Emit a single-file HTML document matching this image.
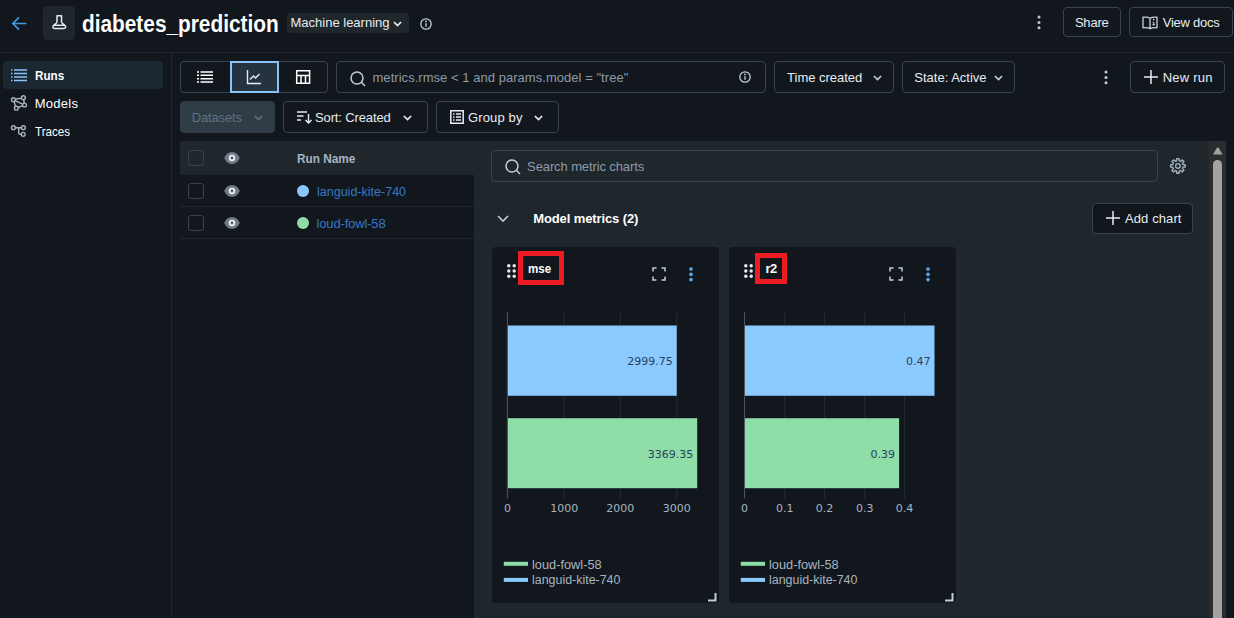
<!DOCTYPE html>
<html lang="en">
<head>
<meta charset="utf-8">
<title>diabetes_prediction</title>
<style>
*{box-sizing:border-box;margin:0;padding:0}
html,body{width:1234px;height:618px;overflow:hidden;background:#11171d;color:#e8ecf0;
  font-family:"Liberation Sans","DejaVu Sans",sans-serif;font-size:13px}
.abs{position:absolute}
#root{position:relative;width:1234px;height:618px;overflow:hidden;background:#11171d}
.btn{position:absolute;border:1px solid #37444f;border-radius:4px;background:#11171d}
.t{position:absolute;white-space:nowrap;line-height:1;transform-origin:0 0}
svg{position:absolute;overflow:visible}
.cb{width:16px;height:16px;border:1px solid #38424b;border-radius:3px}
.card{width:227px;height:356px;background:#11171d;border-radius:4px}
</style>
</head>
<body>
<div id="root">
<div class="abs" style="left:0;top:52px;width:1234px;height:1px;background:#1f272d"></div>
<svg style="left:11px;top:14.500px" width="17" height="17" viewBox="0 0 16 16"><path d="M14.500 8H2.200M7.500 2.300L1.800 8l5.700 5.700" fill="none" stroke="#4299e0" stroke-width="1.600"/></svg>
<div class="abs" style="left:43px;top:6px;width:32px;height:34px;border-radius:4px;background:#1f272d"></div>
<svg style="left:0;top:0" width="90" height="50" viewBox="0 0 90 50"><path d="M57 15.700H61.500V22C61.500 24 65.700 24.300 65.700 26.800C65.700 27.900 65 28.400 64 28.400H54.500C53.500 28.400 52.800 27.900 52.800 26.800C52.800 24.300 57 24 57 22Z M54 25.300H64.500" fill="none" stroke="#e8ecf0" stroke-width="1.500" stroke-linejoin="round"/></svg>
<div class="t" style="left:82.4px;top:12.93px;font-size:23px;font-weight:bold;transform:scaleX(0.9051);color:#ffffff">diabetes_prediction</div>
<div class="abs" style="left:287px;top:13px;width:121.500px;height:19.500px;border-radius:4px;background:#1f272d"></div>
<div class="t" style="left:290.5px;top:16px;font-size:13px;color:#e8ecf0">Machine learning</div>
<svg style="left:392.5px;top:20.5px" width="9" height="6" viewBox="0 0 9 6"><path d="M.9 1l3.600 3.600L8.100 1" fill="none" stroke="#e8ecf0" stroke-width="1.700"/></svg>
<svg style="left:420px;top:17.5px" width="12" height="12" viewBox="0 0 12 12"><circle cx="6" cy="6" r="5.200" fill="none" stroke="#c0cdd8" stroke-width="1.300"/><path d="M6 5.300v3.400" stroke="#c0cdd8" stroke-width="1.400"/><circle cx="6" cy="3.400" r=".9" fill="#c0cdd8"/></svg>
<svg style="left:1037px;top:14.5px" width="4" height="15" viewBox="0 0 4 15"><circle cx="2" cy="2" r="1.500" fill="#c0cdd8"/><circle cx="2" cy="7.400" r="1.500" fill="#c0cdd8"/><circle cx="2" cy="12.800" r="1.500" fill="#c0cdd8"/></svg>
<div class="btn" style="left:1063px;top:7px;width:58px;height:30px;"></div>
<div class="t" style="left:1074.9px;top:15.9px;font-size:13px;letter-spacing:-0.2px;color:#e8ecf0">Share</div>
<div class="btn" style="left:1129px;top:7px;width:104px;height:30px;"></div>
<div class="t" style="left:1162.7px;top:15.9px;font-size:13px;letter-spacing:-0.23px;color:#e8ecf0">View docs</div>
<svg style="left:1142px;top:15.500px" width="16" height="14" viewBox="0 0 16 14"><path d="M8 2.200C6.500 1.200 3.500 1 1 1.200v10.600c2.500-.2 5.500 0 7 1 1.500-1 4.500-1.200 7-1V1.200C12.500 1 9.500 1.200 8 2.200zM8 2.200v10.600" fill="none" stroke="#c8d2dc" stroke-width="1.300" stroke-linejoin="round"/><path d="M10.700 6.300h1.100v2.500M10.400 8.800h2.600" stroke="#dfe5ea" stroke-width="1" fill="none"/><circle cx="11.700" cy="3.600" r=".8" fill="#dfe5ea"/></svg>
<div class="abs" style="left:171px;top:53px;width:1px;height:565px;background:#1f272d"></div>
<div class="abs" style="left:3px;top:61px;width:160px;height:28px;border-radius:4px;background:#1b2731"></div>
<svg style="left:11px;top:69px" width="16" height="12" viewBox="0 0 16 12"><path d="M3 1h13M3 4.500h13M3 8h13M3 11.500h13" stroke="#8ac3f5" stroke-width="1.400"/><path d="M0 1h1.500M0 4.500h1.500M0 8h1.500M0 11.500h1.500" stroke="#8ac3f5" stroke-width="1.400"/></svg>
<div class="t" style="left:34.7px;top:68.8px;font-size:13px;font-weight:bold;transform:scaleX(0.8973);color:#ffffff">Runs</div>
<svg style="left:0;top:0" width="60" height="145" viewBox="0 0 60 145"><g fill="none" stroke="#a9b4be" stroke-width="1.400"><circle cx="13.400" cy="99.700" r="1.900"/><circle cx="23.400" cy="97.700" r="1.900"/><circle cx="24.500" cy="105" r="1.900"/><circle cx="16.300" cy="108.200" r="1.900"/><path d="M15.300 99.300l6.200-1.200M15.100 100.600l7.600 3.600M14 101.500l1.700 4.900M23.700 99.600l.5 3.500M22.700 105.700l-4.600 1.800"/></g></svg>
<div class="t" style="left:34.7px;top:96.8px;font-size:13px;letter-spacing:0.28px;color:#ffffff">Models</div>
<svg style="left:0;top:0" width="60" height="145" viewBox="0 0 60 145"><g fill="none" stroke="#a9b4be" stroke-width="1.400"><circle cx="13.400" cy="127.700" r="1.900"/><circle cx="23.400" cy="127.700" r="1.900"/><circle cx="23.200" cy="134.300" r="1.900"/><path d="M15.300 127.700h6.200M18.700 127.700v5c0 1 .6 1.600 1.600 1.600h1"/></g></svg>
<div class="t" style="left:35.3px;top:125px;font-size:13px;transform:scaleX(0.8926);color:#ffffff">Traces</div>
<div class="abs" style="left:180px;top:61px;width:148px;height:32px;border:1px solid #37444f;border-radius:4px"></div>
<div class="abs" style="left:230px;top:61px;width:49px;height:32px;border:2px solid #8ac3f5;background:#253340"></div>
<svg style="left:197px;top:71px" width="16" height="12" viewBox="0 0 16 12"><path d="M3.500 1h12.500M3.500 4.300h12.500M3.500 7.700h12.500M3.500 11h12.500" stroke="#fff" stroke-width="1.500"/><path d="M0 1h2M0 4.300h2M0 7.700h2M0 11h2" stroke="#fff" stroke-width="1.500"/></svg>
<svg style="left:246px;top:69px" width="16" height="16" viewBox="0 0 16 16"><path d="M1.500 1v13.500H15" fill="none" stroke="#e8ecf0" stroke-width="1.400"/><path d="M4 10.500l3.500-3.500 2 2L13.500 5" fill="none" stroke="#e8ecf0" stroke-width="1.400"/></svg>
<svg style="left:0;top:0" width="400" height="100" viewBox="0 0 400 100"><path d="M296.700 70.700h12.900v12.600h-12.900zM296.700 75.400h12.900M301 75.400v7.900M305.500 75.400v7.900" fill="none" stroke="#fff" stroke-width="1.500"/></svg>
<div class="abs" style="left:336px;top:61px;width:430px;height:32px;border:1px solid #37444f;border-radius:4px"></div>
<svg style="left:350px;top:70.5px" width="16" height="16" viewBox="0 0 16 16"><circle cx="7" cy="7" r="6" fill="none" stroke="#c0cdd8" stroke-width="1.500"/><path d="M11.300 11.300l3.700 3.700" stroke="#c0cdd8" stroke-width="1.500"/></svg>
<div class="t" style="left:372.5px;top:71px;font-size:13px;letter-spacing:0.04px;color:#8d9ba8">metrics.rmse &lt; 1 and params.model = "tree"</div>
<svg style="left:739.3px;top:71px" width="12" height="12" viewBox="0 0 12 12"><circle cx="6" cy="6" r="5.200" fill="none" stroke="#c0cdd8" stroke-width="1.300"/><path d="M6 5.300v3.400" stroke="#c0cdd8" stroke-width="1.400"/><circle cx="6" cy="3.400" r=".9" fill="#c0cdd8"/></svg>
<div class="btn" style="left:774px;top:61px;width:120px;height:32px;"></div>
<div class="t" style="left:787.1px;top:71px;font-size:13px;letter-spacing:-0.02px;color:#e8ecf0">Time created</div>
<svg style="left:873px;top:74.5px" width="9" height="6" viewBox="0 0 9 6"><path d="M.9 1l3.600 3.600L8.100 1" fill="none" stroke="#c0cdd8" stroke-width="1.700"/></svg>
<div class="btn" style="left:902px;top:61px;width:113px;height:32px;"></div>
<div class="t" style="left:914.3px;top:71px;font-size:13px;color:#e8ecf0">State: Active</div>
<svg style="left:994px;top:74.5px" width="9" height="6" viewBox="0 0 9 6"><path d="M.9 1l3.600 3.600L8.100 1" fill="none" stroke="#c0cdd8" stroke-width="1.700"/></svg>
<svg style="left:1104px;top:69.5px" width="4" height="15" viewBox="0 0 4 15"><circle cx="2" cy="2" r="1.500" fill="#c0cdd8"/><circle cx="2" cy="7.400" r="1.500" fill="#c0cdd8"/><circle cx="2" cy="12.800" r="1.500" fill="#c0cdd8"/></svg>
<div class="btn" style="left:1130px;top:61px;width:95px;height:32px;"></div>
<svg style="left:1144px;top:70px" width="14" height="14" viewBox="0 0 14 14"><path d="M7 0v14M0 7h14" stroke="#e8ecf0" stroke-width="1.500"/></svg>
<div class="t" style="left:1162.7px;top:71px;font-size:13px;letter-spacing:0.23px;color:#e8ecf0">New run</div>
<div class="btn" style="left:180px;top:101px;width:95px;height:32px;background:#303c46;border-color:#303c46"></div>
<div class="t" style="left:191.8px;top:111px;font-size:13px;letter-spacing:-0.17px;color:#5f7281">Datasets</div>
<svg style="left:254px;top:114.5px" width="9" height="6" viewBox="0 0 9 6"><path d="M.9 1l3.600 3.600L8.100 1" fill="none" stroke="#5f7281" stroke-width="1.700"/></svg>
<div class="btn" style="left:283px;top:101px;width:145px;height:32px;"></div>
<div class="t" style="left:315px;top:111px;font-size:13px;letter-spacing:-0.13px;color:#e8ecf0">Sort: Created</div>
<svg style="left:402.5px;top:114.5px" width="9" height="6" viewBox="0 0 9 6"><path d="M.9 1l3.600 3.600L8.100 1" fill="none" stroke="#e8ecf0" stroke-width="1.700"/></svg>
<svg style="left:296.500px;top:111px" width="16" height="13" viewBox="0 0 16 13"><path d="M0 1h10M0 5h6.500M0 9h4" stroke="#e8ecf0" stroke-width="1.500"/><path d="M11.500 3v9M8.500 9l3 3 3-3" fill="none" stroke="#e8ecf0" stroke-width="1.400"/></svg>
<div class="btn" style="left:436px;top:101px;width:123px;height:32px;"></div>
<div class="t" style="left:468px;top:111px;font-size:13px;letter-spacing:0.14px;color:#e8ecf0">Group by</div>
<svg style="left:534px;top:114.5px" width="9" height="6" viewBox="0 0 9 6"><path d="M.9 1l3.600 3.600L8.100 1" fill="none" stroke="#e8ecf0" stroke-width="1.700"/></svg>
<svg style="left:449.500px;top:110px" width="14" height="14" viewBox="0 0 14 14"><path d="M.8.800h12.400v12.400H.800z" fill="none" stroke="#e8ecf0" stroke-width="1.500"/><path d="M3 4h1.500M6 4h5M3 7h1.500M6 7h5M3 10h1.500M6 10h5" stroke="#e8ecf0" stroke-width="1.300"/></svg>
<div class="abs" style="left:180px;top:141px;width:294px;height:34px;background:#1f272d"></div>
<div class="abs" style="left:180px;top:206px;width:294px;height:1px;background:#1f272d"></div>
<div class="abs" style="left:180px;top:238px;width:294px;height:1px;background:#1f272d"></div>
<div class="abs cb" style="left:188px;top:150px"></div>
<div class="abs cb" style="left:188px;top:183px"></div>
<div class="abs cb" style="left:188px;top:215px"></div>
<svg style="left:224.2px;top:152.2px" width="16" height="12" viewBox="0 0 16 12"><path d="M.2 6C1.800 2.200 4.800 0 8 0s6.200 2.200 7.800 6C14.200 9.800 11.200 12 8 12S1.800 9.800 .2 6z" fill="#717d88"/><circle cx="8" cy="6" r="3.200" fill="#eef1f4"/><circle cx="8" cy="6" r="1.400" fill="#4c5863"/></svg>
<svg style="left:224.2px;top:185px" width="16" height="12" viewBox="0 0 16 12"><path d="M.2 6C1.800 2.200 4.800 0 8 0s6.200 2.200 7.800 6C14.200 9.800 11.200 12 8 12S1.800 9.800 .2 6z" fill="#717d88"/><circle cx="8" cy="6" r="3.200" fill="#eef1f4"/><circle cx="8" cy="6" r="1.400" fill="#4c5863"/></svg>
<svg style="left:224.2px;top:216.8px" width="16" height="12" viewBox="0 0 16 12"><path d="M.2 6C1.800 2.200 4.800 0 8 0s6.200 2.200 7.800 6C14.200 9.800 11.200 12 8 12S1.800 9.800 .2 6z" fill="#717d88"/><circle cx="8" cy="6" r="3.200" fill="#eef1f4"/><circle cx="8" cy="6" r="1.400" fill="#4c5863"/></svg>
<div class="t" style="left:296.6px;top:152.1px;font-size:13px;font-weight:bold;transform:scaleX(0.9049);color:#a8b5c0">Run Name</div>
<div class="abs" style="left:297px;top:185px;width:12px;height:12px;border-radius:50%;background:#8ac7fd"></div>
<div class="t" style="left:316.5px;top:184.5px;font-size:13px;transform:scaleX(0.9627);color:#3678c6">languid-kite-740</div>
<div class="abs" style="left:297px;top:217px;width:12px;height:12px;border-radius:50%;background:#8edda8"></div>
<div class="t" style="left:316.5px;top:216.5px;font-size:13px;letter-spacing:-0.15px;color:#3678c6">loud-fowl-58</div>
<div class="abs" style="left:474px;top:141px;width:735px;height:477px;background:#1f272d"></div>
<div class="abs" style="left:491px;top:150px;width:667px;height:32px;border:1px solid #37444f;border-radius:4px"></div>
<svg style="left:504.5px;top:159px" width="16" height="16" viewBox="0 0 16 16"><circle cx="7" cy="7" r="6" fill="none" stroke="#c0cdd8" stroke-width="1.500"/><path d="M11.300 11.300l3.700 3.700" stroke="#c0cdd8" stroke-width="1.500"/></svg>
<div class="t" style="left:527.1px;top:160px;font-size:13px;letter-spacing:-0.11px;color:#8d9ba8">Search metric charts</div>
<svg style="left:0;top:0" width="1234" height="200" viewBox="0 0 1234 200"><g fill="none" stroke="#a3b0bc" stroke-width="1.400" stroke-linejoin="round"><path d="M1176.62 160.76L1176.69 158.60L1179.11 158.60L1179.18 160.76L1180.63 161.36L1182.20 159.88L1183.92 161.60L1182.44 163.17L1183.04 164.62L1185.20 164.69L1185.20 167.11L1183.04 167.18L1182.44 168.63L1183.92 170.20L1182.20 171.92L1180.63 170.44L1179.18 171.04L1179.11 173.20L1176.69 173.20L1176.62 171.04L1175.17 170.44L1173.60 171.92L1171.88 170.20L1173.36 168.63L1172.76 167.18L1170.60 167.11L1170.60 164.69L1172.76 164.62L1173.36 163.17L1171.88 161.60L1173.60 159.88L1175.17 161.36Z"/><circle cx="1177.900" cy="165.900" r="2.300"/></g></svg>
<svg style="left:497px;top:214.500px" width="12" height="8" viewBox="0 0 12 8"><path d="M1 1l5 5 5-5" fill="none" stroke="#c0cdd8" stroke-width="1.600"/></svg>
<div class="t" style="left:533.2px;top:212.2px;font-size:13px;font-weight:bold;letter-spacing:-0.11px;color:#ffffff">Model metrics (2)</div>
<div class="btn" style="left:1092px;top:203px;width:101px;height:31px;"></div>
<svg style="left:1105.5px;top:211px" width="14" height="14" viewBox="0 0 14 14"><path d="M7 0v14M0 7h14" stroke="#e8ecf0" stroke-width="1.500"/></svg>
<div class="t" style="left:1125px;top:211.7px;font-size:13px;letter-spacing:0.1px;color:#e8ecf0">Add chart</div>
<div class="abs" style="left:1208.500px;top:141px;width:17px;height:477px;background:#2a2d2f"></div>
<svg style="left:1213px;top:146.500px" width="9.500" height="7.500" viewBox="0 0 9.500 7.500"><path d="M0 7.500L3.900 .7Q4.750 -.3 5.600 .7L9.500 7.500z" fill="#a4a3a2"/></svg>
<div class="abs" style="left:1213px;top:159.500px;width:9.200px;height:470px;border-radius:4.600px;background:#a4a3a2"></div>
<div class="abs card" style="left:492px;top:247px"></div>
<svg style="left:507.3px;top:264px" width="9" height="14" viewBox="0 0 9 14"><g fill="#e8ecf0"><circle cx="1.800" cy="1.700" r="1.700"/><circle cx="7.200" cy="1.700" r="1.700"/><circle cx="1.800" cy="7" r="1.700"/><circle cx="7.200" cy="7" r="1.700"/><circle cx="1.800" cy="12.300" r="1.700"/><circle cx="7.200" cy="12.300" r="1.700"/></g></svg>
<div class="abs" style="left:518px;top:251px;width:46px;height:34px;border:5px solid #ed1c24"></div>
<div class="t" style="left:528.4px;top:262.2px;font-size:13px;font-weight:bold;transform:scaleX(0.8886);color:#ffffff">mse</div>
<svg style="left:651.5px;top:267px" width="14" height="14" viewBox="0 0 14 14"><path d="M1 4.500V1h3.500M9.500 1H13v3.500M13 9.500V13H9.500M4.500 13H1V9.500" fill="none" stroke="#c0cdd8" stroke-width="1.500"/></svg>
<svg style="left:688.7px;top:266.700px" width="4" height="15" viewBox="0 0 4 15"><circle cx="2" cy="2" r="1.850" fill="#58a6e8"/><circle cx="2" cy="7.300" r="1.850" fill="#58a6e8"/><circle cx="2" cy="12.600" r="1.850" fill="#58a6e8"/></svg>
<svg style="left:492px;top:247px" width="227" height="356" viewBox="0 0 227 356">
<path d="M72.2 65V251.500" stroke="#232b33" stroke-width="1"/>
<path d="M128.3 65V251.500" stroke="#232b33" stroke-width="1"/>
<path d="M184.7 65V251.500" stroke="#232b33" stroke-width="1"/>
<path d="M15.4 65V251.500" stroke="#4d555d" stroke-width="1"/>
<rect x="15.9" y="78.500" width="168.8" height="70.300" fill="#8acaff"/>
<rect x="15.9" y="171.200" width="189.3" height="70" fill="#8fdda7"/>
<text x="180.70000000000002" y="118.400" text-anchor="end" font-family="DejaVu Sans, Verdana, sans-serif" font-size="11" fill="#2a3f5f">2999.75</text>
<text x="201.20000000000002" y="210.900" text-anchor="end" font-family="DejaVu Sans, Verdana, sans-serif" font-size="11" fill="#2a3f5f">3369.35</text>
<text x="15.4" y="265" text-anchor="middle" font-family="DejaVu Sans, Verdana, sans-serif" font-size="11" fill="#a8b5c0">0</text>
<text x="72.2" y="265" text-anchor="middle" font-family="DejaVu Sans, Verdana, sans-serif" font-size="11" fill="#a8b5c0">1000</text>
<text x="128.3" y="265" text-anchor="middle" font-family="DejaVu Sans, Verdana, sans-serif" font-size="11" fill="#a8b5c0">2000</text>
<text x="184.7" y="265" text-anchor="middle" font-family="DejaVu Sans, Verdana, sans-serif" font-size="11" fill="#a8b5c0">3000</text>
<path d="M11.750 316.800h24.300" stroke="#8fdda7" stroke-width="4"/>
<path d="M11.750 332.900h24.300" stroke="#8acaff" stroke-width="4"/>
<path d="M216 353.500h7.500V346" fill="none" stroke="#c0cdd8" stroke-width="2"/>
</svg>
<div class="t" style="left:531.9px;top:558.64px;font-size:12px;transform:scaleX(1.0657);color:#a8b5c0">loud-fowl-58</div>
<div class="t" style="left:531.9px;top:574.44px;font-size:12px;transform:scaleX(1.0358);color:#a8b5c0">languid-kite-740</div>
<div class="abs card" style="left:729px;top:247px"></div>
<svg style="left:744.3px;top:264px" width="9" height="14" viewBox="0 0 9 14"><g fill="#e8ecf0"><circle cx="1.800" cy="1.700" r="1.700"/><circle cx="7.200" cy="1.700" r="1.700"/><circle cx="1.800" cy="7" r="1.700"/><circle cx="7.200" cy="7" r="1.700"/><circle cx="1.800" cy="12.300" r="1.700"/><circle cx="7.200" cy="12.300" r="1.700"/></g></svg>
<div class="abs" style="left:755px;top:253px;width:32px;height:31px;border:5px solid #ed1c24"></div>
<div class="t" style="left:765.4px;top:262.2px;font-size:13px;font-weight:bold;letter-spacing:-0.4px;color:#ffffff">r2</div>
<svg style="left:888.5px;top:267px" width="14" height="14" viewBox="0 0 14 14"><path d="M1 4.500V1h3.500M9.500 1H13v3.500M13 9.500V13H9.500M4.500 13H1V9.500" fill="none" stroke="#c0cdd8" stroke-width="1.500"/></svg>
<svg style="left:925.7px;top:266.700px" width="4" height="15" viewBox="0 0 4 15"><circle cx="2" cy="2" r="1.850" fill="#58a6e8"/><circle cx="2" cy="7.300" r="1.850" fill="#58a6e8"/><circle cx="2" cy="12.600" r="1.850" fill="#58a6e8"/></svg>
<svg style="left:729px;top:247px" width="227" height="356" viewBox="0 0 227 356">
<path d="M55.7 65V251.500" stroke="#232b33" stroke-width="1"/>
<path d="M95.6 65V251.500" stroke="#232b33" stroke-width="1"/>
<path d="M135.7 65V251.500" stroke="#232b33" stroke-width="1"/>
<path d="M175.6 65V251.500" stroke="#232b33" stroke-width="1"/>
<path d="M15.5 65V251.500" stroke="#4d555d" stroke-width="1"/>
<rect x="16.0" y="78.500" width="189.5" height="70.300" fill="#8acaff"/>
<rect x="16.0" y="171.200" width="154.1" height="70" fill="#8fdda7"/>
<text x="201.5" y="118.400" text-anchor="end" font-family="DejaVu Sans, Verdana, sans-serif" font-size="11" fill="#2a3f5f">0.47</text>
<text x="166.1" y="210.900" text-anchor="end" font-family="DejaVu Sans, Verdana, sans-serif" font-size="11" fill="#2a3f5f">0.39</text>
<text x="15.5" y="265" text-anchor="middle" font-family="DejaVu Sans, Verdana, sans-serif" font-size="11" fill="#a8b5c0">0</text>
<text x="55.7" y="265" text-anchor="middle" font-family="DejaVu Sans, Verdana, sans-serif" font-size="11" fill="#a8b5c0">0.1</text>
<text x="95.6" y="265" text-anchor="middle" font-family="DejaVu Sans, Verdana, sans-serif" font-size="11" fill="#a8b5c0">0.2</text>
<text x="135.7" y="265" text-anchor="middle" font-family="DejaVu Sans, Verdana, sans-serif" font-size="11" fill="#a8b5c0">0.3</text>
<text x="175.6" y="265" text-anchor="middle" font-family="DejaVu Sans, Verdana, sans-serif" font-size="11" fill="#a8b5c0">0.4</text>
<path d="M11.750 316.800h24.300" stroke="#8fdda7" stroke-width="4"/>
<path d="M11.750 332.900h24.300" stroke="#8acaff" stroke-width="4"/>
<path d="M216 353.500h7.500V346" fill="none" stroke="#c0cdd8" stroke-width="2"/>
</svg>
<div class="t" style="left:768.9px;top:558.64px;font-size:12px;transform:scaleX(1.0657);color:#a8b5c0">loud-fowl-58</div>
<div class="t" style="left:768.9px;top:574.44px;font-size:12px;transform:scaleX(1.0358);color:#a8b5c0">languid-kite-740</div>
</div>
</body>
</html>
